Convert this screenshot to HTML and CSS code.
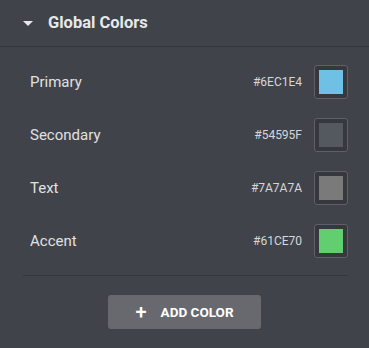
FILE: index.html
```html
<!DOCTYPE html>
<html>
<head>
<title>Global Colors</title>
<link rel="stylesheet" href="styles.css">
</head>
<body>

<div class="panel">
  <div class="section-head">
    <span class="caret"></span>
    <span class="section-title">Global Colors</span>
  </div>

  <div class="section-body">
    <div class="color-list">
      <div class="color-row">
        <span class="color-name">Primary</span>
        <span class="color-hex">#6EC1E4</span>
        <span class="swatch"><span class="swatch-fill primary"></span></span>
      </div>
      <div class="color-row">
        <span class="color-name">Secondary</span>
        <span class="color-hex">#54595F</span>
        <span class="swatch"><span class="swatch-fill secondary"></span></span>
      </div>
      <div class="color-row">
        <span class="color-name">Text</span>
        <span class="color-hex">#7A7A7A</span>
        <span class="swatch"><span class="swatch-fill text"></span></span>
      </div>
      <div class="color-row">
        <span class="color-name">Accent</span>
        <span class="color-hex">#61CE70</span>
        <span class="swatch"><span class="swatch-fill accent"></span></span>
      </div>
    </div>

    <div class="divider"></div>

    <div class="actions">
      <button class="add-btn"><span class="plus">+</span> ADD COLOR</button>
    </div>
  </div>
</div>

</body>
</html>
```

FILE: styles.css
```css
/* Reset */
* {
  margin: 0;
  padding: 0;
  box-sizing: border-box;
}

body {
  font-family: Roboto, 'Liberation Sans', sans-serif;
  background-color: #404349;
  color: #e0e1e3;
  width: 369px;
  height: 348px;
  overflow: hidden;
}

/* Section header */
.section-head {
  display: flex;
  align-items: center;
  height: 47px;
  padding-left: 23px;
  border-bottom: 1px solid #33353a;
}

.caret {
  width: 0;
  height: 0;
  border-left: 5px solid transparent;
  border-right: 5px solid transparent;
  border-top: 5px solid #e6e8ea;
  margin-right: 15px;
  margin-top: 0;
}

.section-title {
  font-size: 16.5px;
  font-weight: 700;
  color: #e6e8ea;
  margin-top: -2px;
}

/* Body */
.section-body {
  padding: 9px 21px 0 23px;
}

.color-row {
  display: flex;
  align-items: center;
  padding: 9px 0 10px 7px;
}

.color-name {
  flex: 1;
  font-size: 15px;
  color: #e0e1e3;
}

.color-hex {
  font-size: 12px;
  color: #d5d7da;
  margin-right: 12px;
}

.swatch {
  width: 34px;
  height: 34px;
  border: 1px solid #5d6067;
  border-radius: 3px;
  background-color: #36383d;
  display: flex;
  align-items: center;
  justify-content: center;
}

.swatch-fill {
  width: 24px;
  height: 24px;
}

.swatch-fill.primary { background-color: #6ec1e4; }
.swatch-fill.secondary { background-color: #54595f; }
.swatch-fill.text { background-color: #7a7a7a; }
.swatch-fill.accent { background-color: #61ce70; }

.divider {
  height: 1px;
  background-color: #35373c;
  margin-top: 7px;
}

/* Add button */
.actions {
  display: flex;
  justify-content: center;
  padding-top: 19px;
  padding-right: 2px;
}

.add-btn {
  width: 153px;
  height: 34px;
  border: none;
  border-radius: 3px;
  background-color: #67696e;
  color: #ffffff;
  font-family: Roboto, 'Liberation Sans', sans-serif;
  font-size: 13.5px;
  font-weight: 700;
  display: flex;
  align-items: center;
  justify-content: center;
}

.plus {
  font-size: 20px;
  font-weight: 500;
  margin-right: 14px;
  line-height: 1;
}
```
